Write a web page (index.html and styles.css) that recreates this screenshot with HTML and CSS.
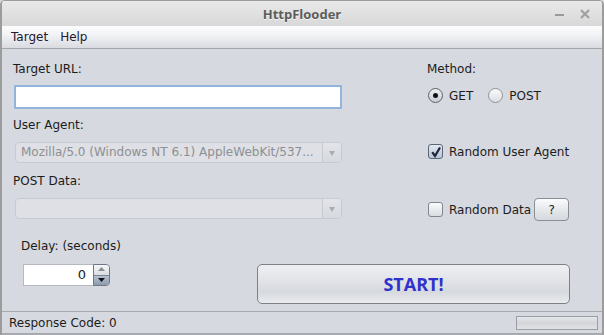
FILE: index.html
```html
<!DOCTYPE html>
<html>
<head>
	<title>HttpFlooder</title>
	<link rel="stylesheet" href="styles.css">
</head>
<body>
	<div class="window">
		<div class="titlebar">
			<span></span>
			<span class="title">HttpFlooder</span>
			<div class="wm-buttons">
				<svg width="9" height="10" viewBox="0 0 9 10"><rect x="0" y="5" width="9" height="2" fill="#9a9a9a"/></svg>
				<svg width="10" height="10" viewBox="0 0 10 10"><path d="M1 1 L9 9 M9 1 L1 9" stroke="#a2a2a2" stroke-width="2.4"/></svg>
			</div>
		</div>
		<div class="menubar">
			<span>Target</span>
			<span>Help</span>
		</div>
		<div class="content">
			<div class="top">
				<div class="left">
					<div class="label">Target URL:</div>
					<div class="textfield"></div>
					<div class="label gap-sm">User Agent:</div>
					<div class="combo disabled">
						<span class="combo-text">Mozilla/5.0 (Windows NT 6.1) AppleWebKit/537...</span>
						<span class="combo-arrow"></span>
					</div>
					<div class="label gap-md">POST Data:</div>
					<div class="combo disabled">
						<span class="combo-text"></span>
						<span class="combo-arrow"></span>
					</div>
				</div>
				<div class="right">
					<div class="label">Method:</div>
					<div class="radios">
						<span class="radio selected"></span><span class="opt">GET</span>
						<span class="radio"></span><span class="opt">POST</span>
					</div>
					<div class="check-row rua">
						<span class="checkbox checked">
							<svg width="12" height="12" viewBox="0 0 12 12"><path d="M2.2 6.2 L5 10 L10 1.5" fill="none" stroke="#1b2438" stroke-width="2.2"/></svg>
						</span>
						<span class="opt">Random User Agent</span>
					</div>
					<div class="check-row rdata">
						<span class="checkbox"></span>
						<span class="opt">Random Data</span>
						<button class="help-btn">?</button>
					</div>
				</div>
			</div>
			<div class="bottom">
				<div class="delay">
					<div class="label">Delay: (seconds)</div>
					<div class="spinner">
						<div class="spin-field">0</div>
						<div class="spin-buttons">
							<div class="spin-up"><svg width="7" height="5" viewBox="0 0 7 5"><path d="M0 4 L3.5 0 L7 4 Z" fill="#8a8d92"/></svg></div>
							<div class="spin-down"><svg width="7" height="5" viewBox="0 0 7 5"><path d="M0 0 L7 0 L3.5 4 Z" fill="#111"/></svg></div>
						</div>
					</div>
				</div>
				<button class="start">START!</button>
			</div>
		</div>
		<div class="statusbar">
			<span>Response Code: 0</span>
			<div class="progress"></div>
		</div>
	</div>
</body>
</html>
```

FILE: styles.css
```css
body{
  margin:0;
  background:#d6d9df;
  font-family:"DejaVu Sans", sans-serif;
  font-size:12px;
  color:#1c1c1c;
}
.window{
  width:604px;
  height:335px;
  box-sizing:border-box;
  display:flex;
  flex-direction:column;
  border-left:2px solid #9c9c9c;
  border-right:2px solid #9c9c9c;
  border-radius:5px 5px 0 0;
  overflow:hidden;
}
.titlebar{
  height:26px;
  flex:none;
  display:grid;
  grid-template-columns:1fr auto 1fr;
  align-items:center;
  background:linear-gradient(#e9e9e9,#d8d8d8);
  border-top:1px solid #9c9c9c;
  box-sizing:border-box;
}
.title{
  font-family:"Open Sans", sans-serif;
  font-weight:bold;
  font-size:13px;
  color:#5c5c5c;
  text-shadow:0 1px 0 #f4f4f4;
}
.wm-buttons{
  justify-self:end;
  display:flex;
  align-items:center;
  gap:16px;
  padding-right:12px;
  padding-top:1px;
}
.wm-buttons svg{
  display:block;
}
.menubar{
  height:22px;
  flex:none;
  display:flex;
  align-items:center;
  gap:12px;
  padding-left:9px;
  background:linear-gradient(#fcfcfd,#f2f3f5 40%,#d9dbe1);
  border-bottom:1px solid #a4a6ab;
  color:#221a33;
}
.content{
  flex:1;
  padding-left:11px;
}
.top{
  display:flex;
  align-items:flex-start;
}
.left{
  width:329px;
  display:flex;
  flex-direction:column;
}
.label{
  line-height:14px;
  margin-top:13px;
}
.gap-sm{
  margin-top:9px;
}
.gap-md{
  margin-top:11px;
}
.textfield{
  margin:9px 0 0 1px;
  width:328px;
  height:24px;
  box-sizing:border-box;
  background:#fff;
  border:2px solid #92b5dd;
  border-radius:1px;
}
.combo{
  margin:10px 0 0 2px;
  width:327px;
  height:21px;
  box-sizing:border-box;
  display:flex;
  border:1px solid #c7cad0;
  border-radius:4px;
  background:#dee0e5;
}
.combo-text{
  flex:1;
  padding-left:5px;
  line-height:19px;
  color:#8c8f94;
  white-space:nowrap;
  overflow:hidden;
}
.combo-arrow{
  width:18px;
  border-left:1px solid #c7cad0;
  background:linear-gradient(#e2e4e8,#d6d9de);
  border-radius:0 3px 3px 0;
  position:relative;
}
.combo-arrow::after{
  content:"";
  position:absolute;
  left:6px;
  top:8px;
  border-left:3.5px solid transparent;
  border-right:3.5px solid transparent;
  border-top:5px solid #a9acb1;
}
.right{
  margin-left:85px;
  display:flex;
  flex-direction:column;
}
.radios{
  margin-top:12px;
  display:flex;
  align-items:center;
  height:15px;
  margin-left:1px;
}
.radio{
  width:15px;
  height:15px;
  box-sizing:border-box;
  border-radius:50%;
  border:1px solid #8e939b;
  background:linear-gradient(#fbfbfc,#dcdee3);
  position:relative;
}
.radio.selected{
  border-color:#5b626d;
  background:linear-gradient(#eef0f3,#c9cdd4);
}
.radio.selected::after{
  content:"";
  position:absolute;
  left:4px;
  top:4px;
  width:5px;
  height:5px;
  border-radius:50%;
  background:#111;
}
.opt{
  margin-left:6px;
  line-height:14px;
}
.radios .opt{
  margin-right:15px;
}
.check-row{
  display:flex;
  align-items:center;
  margin-left:1px;
}
.rua{
  margin-top:41px;
  height:15px;
}
.rdata{
  margin-top:39px;
  height:23px;
}
.checkbox{
  width:15px;
  height:15px;
  box-sizing:border-box;
  border:1px solid #80868f;
  border-radius:3px;
  background:linear-gradient(#fafbfc,#d9dce1);
  display:flex;
  align-items:center;
  justify-content:center;
}
.checkbox.checked{
  border-color:#5d6674;
  background:linear-gradient(#e4e9f1,#b7c3d3);
}
.rdata .opt{
  margin-left:6px;
}
.help-btn{
  margin-left:3px;
  width:35px;
  height:23px;
  padding:0;
  font-family:"DejaVu Sans", sans-serif;
  font-size:12px;
  color:#1c1c1c;
  border:1px solid #8a8d93;
  border-radius:4px;
  background:linear-gradient(#fcfcfd,#e6e8eb 50%,#d5d8dd);
}
.bottom{
  display:flex;
  align-items:flex-start;
  margin-top:18px;
}
.delay{
  margin-left:8px;
  width:236px;
}
.delay .label{
  margin-top:0;
}
.spinner{
  margin:11px 0 0 2px;
  display:flex;
  height:22px;
}
.spin-field{
  width:70px;
  box-sizing:border-box;
  background:#fff;
  border:1px solid #b5b9c0;
  border-right:none;
  text-align:right;
  padding-right:7px;
  line-height:20px;
  font-size:13px;
}
.spin-buttons{
  width:17px;
  display:flex;
  flex-direction:column;
  border:1px solid #6f7784;
  border-radius:0 4px 4px 0;
  overflow:hidden;
  box-sizing:border-box;
}
.spin-up,.spin-down{
  flex:1;
  display:flex;
  align-items:center;
  justify-content:center;
}
.spin-up{
  background:linear-gradient(#f6f7f8,#d9dce1);
  border-bottom:1px solid #7d8592;
}
.spin-down{
  background:linear-gradient(#b6c1cf,#8d9bb0);
}
.spin-up svg,.spin-down svg{
  display:block;
}
.start{
  margin-top:25px;
  width:313px;
  height:40px;
  border:1px solid #7d8086;
  border-radius:5px;
  background:linear-gradient(#eeeff2,#e2e4e8 40%,#d6d9de 70%,#e9ebee);
  font-family:"Open Sans", sans-serif;
  font-weight:bold;
  font-size:18px;
  color:#3131cc;
  padding:0;
}
.statusbar{
  height:24px;
  flex:none;
  box-sizing:border-box;
  display:flex;
  align-items:center;
  justify-content:space-between;
  padding-left:7px;
  padding-right:4px;
  border-top:1px solid #a7a9ae;
  border-bottom:2px solid #a7a9ae;
}
.progress{
  width:82px;
  height:14px;
  box-sizing:border-box;
  border:1px solid #9a9da3;
  background:linear-gradient(#e6e7ea,#d2d4d8 50%,#e2e3e6);
}
```
